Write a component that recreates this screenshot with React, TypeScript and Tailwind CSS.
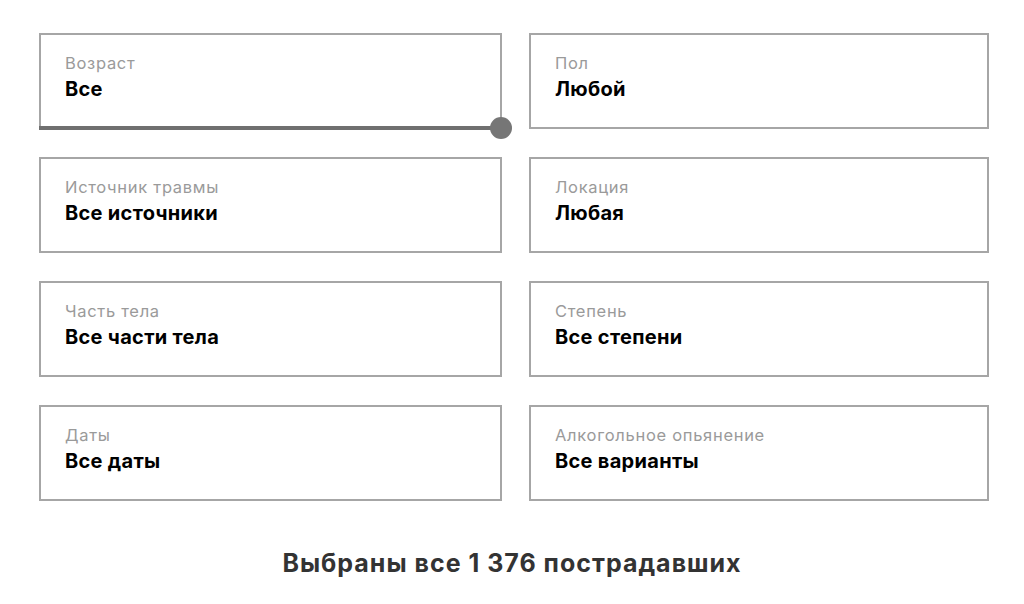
const filters = [
  { label: 'Возраст', value: 'Все', slider: true },
  { label: 'Пол', value: 'Любой' },
  { label: 'Источник травмы', value: 'Все источники' },
  { label: 'Локация', value: 'Любая' },
  { label: 'Часть тела', value: 'Все части тела' },
  { label: 'Степень', value: 'Все степени' },
  { label: 'Даты', value: 'Все даты' },
  { label: 'Алкогольное опьянение', value: 'Все варианты' },
];

function FilterCard({ label, value, slider }: { label: string; value: string; slider?: boolean }) {
  return (
    <div className="relative h-[96px] border-2 border-[#a6a6a6] bg-white pl-[24px] pt-[17px]">
      <div className="text-[16.5px] leading-[22px] tracking-[0.7px] text-[#9a9a9a]">{label}</div>
      <div className="mt-[1px] text-[20px] leading-[28px] tracking-[0.3px] font-bold text-black">{value}</div>
      {slider && (
        <>
          <div className="absolute left-[-2px] right-0 bottom-[-3px] h-[4px] bg-[#6f6f6f]" />
          <div className="absolute right-[-12px] bottom-[-12px] w-[22px] h-[22px] rounded-full bg-[#767676]" />
        </>
      )}
    </div>
  );
}

export default function App() {
  return (
    <div className="w-[1024px] h-[604px] bg-white font-['Inter','Liberation_Sans',sans-serif]">
      <div className="grid grid-cols-[463px_460px] gap-x-[27px] gap-y-[28px] pl-[39px] pt-[33px]">
        {filters.map((f) => (
          <FilterCard key={f.label} {...f} />
        ))}
      </div>
      <div className="mt-[47px] text-center text-[25px] leading-[30px] tracking-[1px] font-bold text-[#333333]">
        Выбраны все 1 376 пострадавших
      </div>
    </div>
  );
}
